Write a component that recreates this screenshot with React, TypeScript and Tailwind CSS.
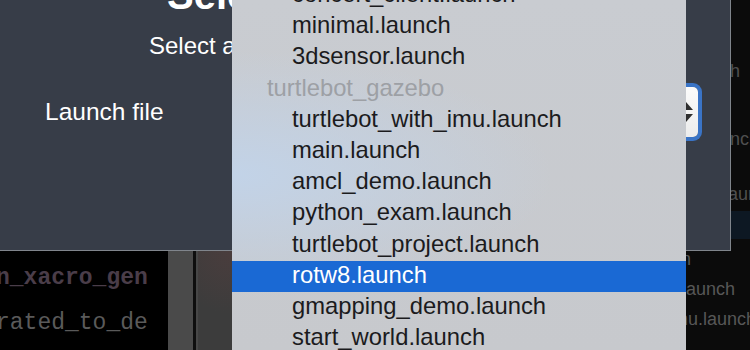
const items: { label: string; header?: boolean; selected?: boolean }[] = [
  { label: "concert_client.launch" },
  { label: "minimal.launch" },
  { label: "3dsensor.launch" },
  { label: "turtlebot_gazebo", header: true },
  { label: "turtlebot_with_imu.launch" },
  { label: "main.launch" },
  { label: "amcl_demo.launch" },
  { label: "python_exam.launch" },
  { label: "turtlebot_project.launch" },
  { label: "rotw8.launch", selected: true },
  { label: "gmapping_demo.launch" },
  { label: "start_world.launch" },
];

function LaunchMenu() {
  return (
    <div className="absolute left-[232px] top-0 w-[454px] h-[350px] overflow-hidden bg-[radial-gradient(ellipse_at_0%_50%,#c2d3e8,transparent_50%),linear-gradient(to_bottom,#c9ccd1,#c7c9cd)]">
      <div className="-mt-[20px] flex flex-col">
        {items.map((it) =>
          it.header ? (
            <div key={it.label} className="h-[31.2px] leading-[28px] pl-[35px] text-[23.8px] text-[#9da0a5] whitespace-nowrap">
              {it.label}
            </div>
          ) : (
            <div
              key={it.label}
              className={
                it.selected
                  ? "h-[31.2px] leading-[28px] pl-[60px] text-[23.8px] text-white bg-[#1a69d4] whitespace-nowrap"
                  : "h-[31.2px] leading-[28px] pl-[60px] text-[23.8px] text-[#1b1b1d] whitespace-nowrap"
              }
            >
              {it.label}
            </div>
          )
        )}
      </div>
    </div>
  );
}

function SelectBox() {
  return (
    <div className="ml-auto w-[420px] h-[50px] rounded-[5px] bg-[linear-gradient(to_bottom,#fbfbfb,#ececec)] ring-[4px] ring-[#3a74c6] flex items-center justify-end pr-[4px]">
      <svg width="16" height="24" viewBox="0 0 16 24">
        <path d="M8 2 L15 10 L1 10 Z" fill="#2f2f2f" />
        <path d="M1 14 L15 14 L8 22 Z" fill="#2f2f2f" />
      </svg>
    </div>
  );
}

export default function App() {
  return (
    <div className="relative w-[750px] h-[350px] overflow-hidden bg-[#0b0b0b] font-['Liberation_Sans',Arial,sans-serif]">
      {/* top: dialog + terminal edge */}
      <div className="flex h-[251px]">
        <div className="w-[731px] bg-[#373d48] border-r border-b border-[#80858c] flex flex-col overflow-hidden">
          <div className="-mt-[26px] pl-[167px] text-[40px] leading-[42px] font-bold text-white whitespace-nowrap">
            Select Launch File
          </div>
          <div className="mt-[15px] pl-[149px] text-[24px] leading-[30px] text-white whitespace-nowrap">
            Select a launch file to start
          </div>
          <div className="mt-[26px] flex items-center pl-[45px] pr-[32px]">
            <span className="text-[24.5px] text-white">Launch file</span>
            <SelectBox />
          </div>
        </div>
        <div className="flex-1 flex flex-col text-[18px] text-[#4f4f4f] whitespace-nowrap overflow-hidden">
          <div className="mt-[59px] leading-[24px] -ml-[1px]">h</div>
          <div className="mt-[44px] leading-[24px] -ml-[1px]">nch</div>
          <div className="mt-[31px] leading-[24px] -ml-[3px]">aunch</div>
          <div className="mt-[5px] h-[28px] bg-[#0d1823]" />
        </div>
      </div>

      {/* bottom: terminals */}
      <div className="flex h-[99px]">
        <div className="w-[168px] bg-black overflow-hidden font-['Liberation_Mono',monospace] text-[23px] whitespace-nowrap">
          <div className="-ml-[4px] mt-[14px] leading-[26px] font-bold text-[#4a3d49]">n_xacro_gen</div>
          <div className="-ml-[4px] mt-[19px] leading-[26px] text-[#5a5a5a]">rated_to_de</div>
        </div>
        <div className="w-[25px] bg-[#4a4a4a]" />
        <div className="w-[3px] bg-[#0e0e0e]" />
        <div className="w-[36px] bg-[radial-gradient(circle_at_100%_0%,#4a3d3d,#3c3c3c_60%)] border-l-2 border-[#474747]" />
        <div className="flex-1 flex flex-col overflow-hidden text-[18px] text-[#575757] whitespace-nowrap">
          <div className="-mt-[7px] pl-[449px] leading-[30px]">n</div>
          <div className="pl-[450px] leading-[30px]">launch</div>
          <div className="pl-[437px] leading-[30px]">imu.launch</div>
        </div>
      </div>

      <LaunchMenu />
    </div>
  );
}
